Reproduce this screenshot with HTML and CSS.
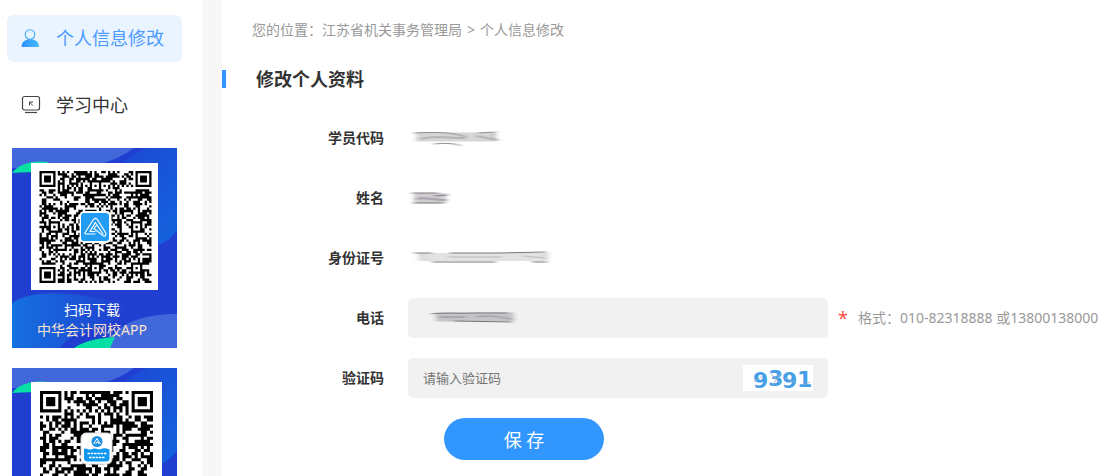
FILE: index.html
```html
<!DOCTYPE html>
<html lang="zh-CN">
  <head>
    <meta charset="UTF-8" />
    <title>个人信息修改</title>
    <link rel="stylesheet" href="styles.css" />
  </head>

  <body>
    <svg class="defs" width="0" height="0" aria-hidden="true">
      <defs>
        <linearGradient id="userFill" x1="0" y1="0" x2="1" y2="0">
          <stop offset="0" stop-color="#2f8fff" />
          <stop offset="1" stop-color="#45bdfb" />
        </linearGradient>
        <linearGradient id="waveRight" x1="0" y1="0" x2="1" y2="1">
          <stop offset="0" stop-color="#1e44d2" />
          <stop offset="1" stop-color="#1365de" />
        </linearGradient>
        <linearGradient id="waveBottom" x1="0" y1="0" x2="1" y2="0">
          <stop offset="0" stop-color="#1570e0" />
          <stop offset="1" stop-color="#203fd0" />
        </linearGradient>
        <filter id="smudge" x="-10%" y="-50%" width="120%" height="200%">
          <feGaussianBlur stdDeviation="2.4 0.7" />
        </filter>
        <g id="bannerBg">
          <rect width="165" height="200" fill="#203fd0" />
          <path d="M95 40C108 14 122 4 136 0H165V82C160 90 154 94 146 97L130 102Z" fill="url(#waveRight)" />
          <path d="M0 0H122C104 13 84 19 60 20H0Z" fill="#4068da" />
          <path d="M0 25C7 16 20 12 36 14V25C24 24 12 24 0 25Z" fill="#06e0a5" />
          <path d="M0 155C14 146 34 144 56 146C80 148 96 152 108 155C124 160 110 172 90 178C70 184 54 190 48 200H0Z" fill="url(#waveBottom)" />
          <path d="M92 200C102 176 130 166 165 166V200Z" fill="#4068da" />
          <path d="M62 200C72 193 86 190 103 189L98 200Z" fill="#06e0a5" />
        </g>
      </defs>
    </svg>

    <div class="page">
      <aside class="sidebar">
        <nav class="menu">
          <a class="menu-item active" href="#">
            <svg class="menu-icon" viewBox="0 0 20 20">
              <circle cx="9" cy="6.6" r="4.8" fill="#e3f3ff" stroke="#45adf8" stroke-width="1.1" />
              <path d="M1 19C0.3 18.8 0.6 14.6 3 13.2C5 12 7 11.6 9.3 11.6C12 11.6 14 12 15.6 13.2C18 14.8 18.2 18.4 17.6 19Z" fill="url(#userFill)" />
            </svg>
            <span>个人信息修改</span>
          </a>
          <a class="menu-item" href="#">
            <svg class="menu-icon" viewBox="0 0 20 20" fill="none" stroke="#444">
              <rect x="1.5" y="1.5" width="17" height="13.5" rx="2" stroke-width="1.2" />
              <path d="M4 17.500H16" stroke-width="1.2" />
              <path d="M8.500 10.500V7H12M8.500 7L11.800 10.500" stroke-width="1" />
            </svg>
            <span>学习中心</span>
          </a>
        </nav>

        <div class="banners">
          <svg class="banner" viewBox="0 0 165 200" role="img" aria-label="扫码下载中华会计网校APP">
            <use href="#bannerBg" />
            <rect x="19" y="15" width="127" height="127" fill="#fff" />
            <g class="qr" data-x="27.5" data-y="23" data-size="112" data-count="49" data-align="6,24,42" data-seed="17"></g>
            <rect x="67.5" y="63" width="32" height="32" rx="5" fill="#fff" />
            <rect x="69" y="65" width="28" height="28" rx="3" fill="#229bf3" />
            <g fill="none" stroke="#fff" stroke-width="1.2" stroke-linejoin="round" stroke-linecap="round">
              <path d="M83 86H74C72.600 86 72.600 85 73.400 84L81.500 71.500C82.500 70 84 70 85.200 71.200L93.500 84.500C95 87 93 89.400 90.500 87.400L82 80.500" />
              <path d="M78 83.500H83M78 83.500L83.300 74.500L91 86M82 80.500L84 78" />
            </g>
            <text class="banner-text" x="80" y="167">扫码下载</text>
            <text class="banner-text warm" x="80" y="187">中华会计网校APP</text>
          </svg>

          <svg class="banner" viewBox="0 0 165 200" role="img" aria-label="二维码">
            <use href="#bannerBg" />
            <rect x="19" y="14" width="131" height="131" fill="#fff" />
            <g class="qr" data-x="28" data-y="23" data-size="113" data-count="37" data-align="30" data-seed="6"></g>
            <rect x="69" y="65" width="31" height="31" rx="5" fill="#fff" stroke="#ddd" />
            <path d="M72 81C74 79.500 76 81.500 78 81.500C80 81.500 81 80 83 80.500C85 81 87 82 89 81C91 80 94 80 97.500 81.500V90Q97.500 93.500 94 93.500H75.500Q72 93.500 72 90Z" fill="#1297ee" />
            <circle cx="85" cy="73.500" r="5.500" fill="#1c8fdf" />
            <path d="M81.500 76L85 70.500L88.500 76M83.500 76L85.500 73.500L87 76" fill="none" stroke="#fff" stroke-width="1" />
            <path d="M75.500 85.500H94.500M77 89.500H92.500" stroke="#fff" stroke-width="1.600" stroke-dasharray="2.500 0.800" />
          </svg>
        </div>
      </aside>

      <main class="content">
        <div class="crumbs">
          您的位置：<a href="#">江苏省机关事务管理局</a><span class="sep">&gt;</span><a href="#">个人信息修改</a>
        </div>
        <h1 class="title">修改个人资料</h1>

        <form class="form" id="profileForm">
          <div class="row">
            <span class="label">学员代码</span>
            <svg class="masked" width="100" height="20" viewBox="0 0 100 20">
              <g filter="url(#smudge)" fill="none">
                <path d="M8 9H88" stroke="#d6d6d6" stroke-width="9" />
                <path d="M6 5C28 4 44 4 58 9M70 5L88 4" stroke="#8a8a8a" />
                <path d="M12 11C30 6 44 11 58 10M68 8L90 12" stroke="#b4b4b4" stroke-width="2" />
                <path d="M26 16C38 15 46 15 53 18M86 5V13" stroke="#8a8a8a" />
              </g>
            </svg>
          </div>
          <div class="row">
            <span class="label">姓名</span>
            <svg class="masked" width="50" height="20" viewBox="0 0 50 20">
              <g filter="url(#smudge)" fill="none">
                <path d="M6 10H38" stroke="#d0ccd2" stroke-width="10" />
                <path d="M4 5H30M26 8L40 7M5 15H36" stroke="#777" />
                <path d="M8 11C18 8 28 13 39 12" stroke="#a8a2ac" stroke-width="2" />
              </g>
            </svg>
          </div>
          <div class="row">
            <span class="label">身份证号</span>
            <svg class="masked" width="150" height="20" viewBox="0 0 150 20">
              <g filter="url(#smudge)" fill="none">
                <path d="M10 9H140" stroke="#e2e2e2" stroke-width="8" />
                <path d="M6 5H24M42 5L90 5L138 4M24 14H88M124 14H139" stroke="#777" />
                <path d="M14 6L20 13M40 9H94M116 8L136 10M138 5V12" stroke="#b8b8b8" stroke-width="1" />
              </g>
            </svg>
          </div>
          <div class="row">
            <label class="label" for="phone">电话</label>
            <div class="field">
              <input type="tel" id="phone" />
              <svg class="phone-mask" width="100" height="20" viewBox="0 0 100 20">
                <g filter="url(#smudge)" fill="none">
                  <path d="M10 9H88" stroke="#c6c4ca" stroke-width="9" />
                  <path d="M5 6C20 4 34 6 48 5H82M28 13L86 14" stroke="#777" />
                  <path d="M12 9H40M50 9C64 6 74 10 86 11" stroke="#aaa" stroke-width="2" />
                </g>
              </svg>
            </div>
            <span class="required">*</span>
            <span class="hint">格式：010-82318888 或13800138000</span>
          </div>
          <div class="row">
            <label class="label" for="code">验证码</label>
            <div class="field">
              <input type="text" id="code" placeholder="请输入验证码" />
              <button class="captcha" type="button" aria-label="换一张">
                <svg width="70" height="26" viewBox="0 0 70 26">
                  <rect width="70" height="26" fill="#fff" />
                  <text class="captcha-text" x="10 25 39 54" y="23 21 23 22">9391</text>
                  <path d="M11 17L21 10M28 9L37 18M42 13L52 17M30 20L38 7M60 20L67 17" stroke="#9fb4c4" stroke-width="0.8" />
                </svg>
              </button>
            </div>
          </div>
          <button class="save" type="submit">保 存</button>
        </form>
      </main>
    </div>
    <script src="qr.js"></script>
  </body>
</html>
```
FILE: styles.css
```css
* {
  box-sizing: border-box;
}

body {
  margin: 0;
  overflow: hidden;
  background-color: #f7f7f7;
  color: #333;
  font-family: "Noto Sans", "Noto Sans CJK SC", sans-serif;
  font-size: 14px;
  line-height: 20px;
}

a {
  color: inherit;
  text-decoration: none;
}

.defs {
  position: absolute;
}

.page {
  display: flex;
  gap: 20px;
  height: 100vh;
}

.sidebar {
  flex: 0 0 202px;
  padding-top: 15px;
  overflow: hidden;
  background-color: #fff;
}

.menu {
  display: flex;
  flex-direction: column;
  gap: 20px;
  padding: 0 20px 0 7px;
}

.menu-item {
  display: flex;
  align-items: center;
  gap: 15px;
  height: 47px;
  padding: 0 0 2px 14px;
  border-radius: 6px;
  font-size: 18px;
}

.menu-item.active {
  background-color: #e9f4ff;
  color: #4d9bff;
}

.menu-icon {
  width: 20px;
  height: 20px;
}

.banners {
  display: flex;
  flex-direction: column;
  gap: 20px;
  padding: 19px 25px 0 12px;
}

.banner {
  display: block;
  width: 100%;
}

.banner-text {
  fill: #fff;
  font-size: 14px;
  text-anchor: middle;
}

.banner-text.warm {
  fill: #fbe3cf;
}

.content {
  flex: 1;
  min-width: 0;
  background-color: #fff;
}

.crumbs {
  padding: 20px 30px 0;
  color: #999;
}

.sep {
  margin: 0 5px;
}

.title {
  margin: 30px 0 0;
  padding-left: 30px;
  border-left: 4px solid #3296ff;
  font-size: 18px;
  line-height: 18px;
}

.form {
  display: flex;
  flex-direction: column;
  align-items: flex-start;
  gap: 20px;
  padding-top: 30px;
}

.row {
  display: flex;
  align-items: center;
  height: 40px;
}

.label {
  width: 162px;
  margin-right: 24px;
  font-weight: bold;
  text-align: right;
}

.field {
  position: relative;
  width: 420px;
}

.field input {
  display: block;
  width: 100%;
  height: 40px;
  padding: 0 15px;
  border: none;
  border-radius: 5px;
  background-color: #f1f1f1;
  font-family: inherit;
  font-size: 13px;
}

.field input::placeholder {
  color: #757575;
}

.phone-mask {
  position: absolute;
  top: 10px;
  left: 18px;
}

.captcha {
  position: absolute;
  top: 7px;
  right: 15px;
  padding: 0;
  border: none;
  background: none;
  cursor: pointer;
}

.captcha svg {
  display: block;
}

.captcha-text {
  fill: #459ee8;
  font-family: "DejaVu Sans", sans-serif;
  font-size: 22px;
  font-weight: bold;
}

.required {
  margin: 0 10px;
  color: #ff4b3e;
  font-size: 18px;
}

.hint {
  color: #999;
  white-space: nowrap;
}

.save {
  width: 160px;
  height: 42px;
  margin-left: 222px;
  border: none;
  border-radius: 21px;
  background-color: #3296ff;
  color: #fff;
  font-family: inherit;
  font-size: 18px;
  cursor: pointer;
}
```
FILE: qr.js
```js
// Fills every .qr group with one path of square modules
document.querySelectorAll(".qr").forEach(function (group) {
  const count = Number(group.dataset.count);
  const size = Number(group.dataset.size) / count;
  const align = group.dataset.align.split(",").map(Number);
  let seed = Number(group.dataset.seed);

  function random() {
    seed = (seed * 16807) % 2147483647;
    return seed / 2147483647;
  }

  function ring(x, y, cx, cy) {
    return Math.max(Math.abs(x - cx), Math.abs(y - cy));
  }

  function isDark(x, y) {
    const noise = random() < 0.56;
    const corners = [[3, 3], [count - 4, 3], [3, count - 4]];
    for (const [cx, cy] of corners) {
      const r = ring(x, y, cx, cy);
      if (r <= 4) return r < 2 || r === 3;
    }
    for (const cx of align) {
      for (const cy of align) {
        const r = ring(x, y, cx, cy);
        const nearCorner = corners.some((c) => ring(cx, cy, c[0], c[1]) < 5);
        if (r <= 2 && !nearCorner) return r !== 1;
      }
    }
    if (x === 6 || y === 6) return (x + y) % 2 === 0;
    return noise;
  }

  let d = "";
  for (let y = 0; y < count; y++) {
    for (let x = 0; x < count; x++) {
      if (isDark(x, y)) d += `M${x} ${y}h1v1h-1z`;
    }
  }

  const path = document.createElementNS("http://www.w3.org/2000/svg", "path");
  path.setAttribute("d", d);
  path.setAttribute(
    "transform",
    `translate(${group.dataset.x} ${group.dataset.y}) scale(${size})`
  );
  group.appendChild(path);
});

document.getElementById("profileForm").addEventListener("submit", function (e) {
  e.preventDefault();
});
```
